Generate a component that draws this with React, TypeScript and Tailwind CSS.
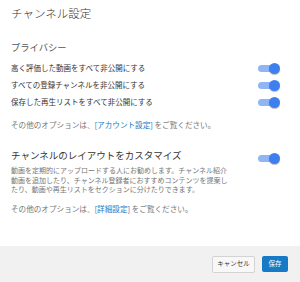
const font = { fontFamily: '"Noto Sans CJK JP", "Noto Sans", sans-serif' };

function Toggle({ className = '' }: { className?: string }) {
  return (
    <div className={`relative w-[22px] h-[11px] shrink-0 ${className}`}>
      <div className="absolute left-0 top-[2px] w-[18px] h-[7px] rounded-full bg-[#8fb5f5]" />
      <div className="absolute right-0 top-0 w-[11px] h-[11px] rounded-full bg-[#3e7ff0] shadow-[0_1px_1px_rgba(0,0,0,0.25)]" />
    </div>
  );
}

const rows = [
  '高く評価した動画をすべて非公開にする',
  'すべての登録チャンネルを非公開にする',
  '保存した再生リストをすべて非公開にする',
];

export default function App() {
  return (
    <div className="w-[300px] h-[282px] bg-white flex flex-col overflow-hidden" style={font}>
      <div className="flex-1 pl-[11px] pr-[20px] pt-[5px]">
        <h1 className="text-[11.5px] leading-[16px] font-light text-[#333]">チャンネル設定</h1>

        <h2 className="mt-[20px] text-[9.3px] leading-[12px] text-[#555]">プライバシー</h2>
        <div className="mt-[6.5px] flex flex-col">
          {rows.map((r) => (
            <div key={r} className="h-[17px] flex items-center justify-between">
              <span className="text-[7.5px] text-[#333]">{r}</span>
              <Toggle />
            </div>
          ))}
        </div>

        <p className="mt-[9.5px] text-[7.6px] leading-[10px] text-[#767676]">
          その他のオプションは、<span className="text-[#167ac6]">[アカウント設定]</span> をご覧ください。
        </p>

        <div className="mt-[19px] flex justify-between">
          <div>
            <h2 className="text-[9.5px] leading-[12px] text-[#333]">チャンネルのレイアウトをカスタマイズ</h2>
            <p className="mt-[5px] text-[7px] leading-[9.5px] text-[#767676] whitespace-nowrap">
              動画を定期的にアップロードする人にお勧めします。チャンネル紹介
              <br />
              動画を追加したり、チャンネル登録者におすすめコンテンツを提案し
              <br />
              たり、動画や再生リストをセクションに分けたりできます。
            </p>
          </div>
          <Toggle className="mt-[3.5px]" />
        </div>

        <p className="mt-[9px] text-[7.6px] leading-[10px] text-[#767676]">
          その他のオプションは、<span className="text-[#167ac6]">[詳細設定]</span> をご覧ください。
        </p>
      </div>

      <div className="h-[36px] bg-[#f1f1f1] flex items-center justify-end gap-[7px] pr-[12px]">
        <button className="w-[43px] h-[17px] bg-[#f8f8f8] border border-[#d3d3d3] rounded-[2px] text-[6.5px] text-[#333] flex items-center justify-center">
          キャンセル
        </button>
        <button className="w-[26px] h-[16px] bg-[#167ac6] rounded-[2px] text-[6.5px] text-white flex items-center justify-center">
          保存
        </button>
      </div>
    </div>
  );
}
